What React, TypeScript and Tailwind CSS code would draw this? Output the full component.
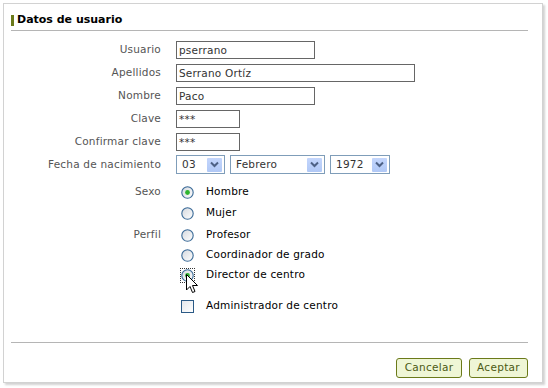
import React from 'react'

const font = { fontFamily: '"DejaVu Sans", Verdana, sans-serif' }

function Radio({ checked }: { checked?: boolean }) {
  return (
    <svg width="13" height="13" viewBox="0 0 13 13">
      <defs>
        <linearGradient id="rg" x1="0" y1="0" x2="1" y2="1">
          <stop offset="0" stopColor="#d4d8de" />
          <stop offset="1" stopColor="#ffffff" />
        </linearGradient>
      </defs>
      <circle cx="6.5" cy="6.5" r="5.7" fill="url(#rg)" stroke="#3a6a97" strokeWidth="1.1" />
      {checked && <circle cx="6.5" cy="6.5" r="2.4" fill="#2fb52f" />}
    </svg>
  )
}

function Select({ value, width }: { value: string; width: string }) {
  return (
    <div className={`${width} flex h-[19px] items-center justify-between border border-[#7f9db9] bg-white pl-[5px] pr-[2px] text-[10.5px] tracking-[0.2px] text-[#333]`}>
      <span>{value}</span>
      <span className="flex h-[14px] w-[15px] items-center justify-center rounded-[1px] bg-gradient-to-b from-[#c4d6fc] to-[#b0c8f6]">
        <svg width="9" height="7" viewBox="0 0 9 7">
          <path d="M1 1.5 L4.5 5 L8 1.5" fill="none" stroke="#4d6185" strokeWidth="2" />
        </svg>
      </span>
    </div>
  )
}

function Row({ label, children, className = 'h-[23px]' }: { label?: string; children: React.ReactNode; className?: string }) {
  return (
    <div className={`flex items-center ${className}`}>
      <div className="w-[150px] text-right text-[10.5px] tracking-[0.2px] text-[#555]">{label}</div>
      <div className="ml-[15px] flex items-center">{children}</div>
    </div>
  )
}

function Option({ label, checked }: { label: string; checked?: boolean }) {
  return (
    <div className="ml-[5px] flex items-center gap-[12px] text-[10.5px] tracking-[0.2px] text-black">
      <Radio checked={checked} />
      <span>{label}</span>
    </div>
  )
}

export default function App() {
  const inputCls = 'h-[18px] border border-[#666] bg-white pl-[2px] text-[10.5px] tracking-[0.2px] leading-[16px] text-[#333]'
  return (
    <div className="h-[388px] w-[548px] bg-white pl-[3px] pt-[3px]" style={font}>
      <div className="relative flex h-[380px] w-[540px] flex-col border border-[#d2d2d2] bg-white pl-[7px] pr-[14px] shadow-[2px_2px_2px_rgba(0,0,0,0.18)]">
        <div className="flex h-[26px] items-center pt-[6px]">
          <span className="h-[11px] w-[3px] bg-[#6b7a1a]" />
          <span className="ml-[3px] text-[11px] font-bold text-black">Datos de usuario</span>
        </div>
        <div className="h-px bg-[#b5b5b5]" />

        <div className="mt-[7px] flex flex-col">
          <Row label="Usuario">
            <div className={`${inputCls} w-[139px]`}>pserrano</div>
          </Row>
          <Row label="Apellidos">
            <div className={`${inputCls} w-[239px]`}>Serrano Ortíz</div>
          </Row>
          <Row label="Nombre">
            <div className={`${inputCls} w-[139px]`}>Paco</div>
          </Row>
          <Row label="Clave">
            <div className={`${inputCls} w-[64px]`}>***</div>
          </Row>
          <Row label="Confirmar clave">
            <div className={`${inputCls} w-[64px]`}>***</div>
          </Row>
          <Row label="Fecha de nacimiento">
            <div className="flex gap-[5px]">
              <Select value="03" width="w-[49px]" />
              <Select value="Febrero" width="w-[95px]" />
              <Select value="1972" width="w-[60px]" />
            </div>
          </Row>

          <Row label="Sexo" className="mt-[6px] h-[20px]">
            <Option label="Hombre" checked />
          </Row>
          <Row className="mt-[1px] h-[20px]">
            <Option label="Mujer" />
          </Row>
          <Row label="Perfil" className="mt-[2px] h-[20px]">
            <Option label="Profesor" />
          </Row>
          <Row className="h-[20px]">
            <Option label="Coordinador de grado" />
          </Row>
          <Row className="h-[20px]">
            <div className="ml-[5px] flex items-center gap-[12px] text-[10.5px] tracking-[0.2px] text-black">
              <span className="relative flex">
                <Radio checked />
                <span className="absolute -left-[1px] -top-[1px] h-[15px] w-[15px] border border-dotted border-[#333]" />
                <svg className="absolute left-[5px] top-[5px]" width="13" height="21" viewBox="0 0 13 21">
                  <path d="M0.5 0.5 L0.5 16 L4 12.5 L6.5 18.5 L9 17.5 L6.5 11.5 L11.5 11.5 Z" fill="#fff" stroke="#000" strokeWidth="1" />
                </svg>
              </span>
              <span>Director de centro</span>
            </div>
          </Row>
          <Row className="mt-[11px] h-[20px]">
            <div className="ml-[5px] flex items-center gap-[12px] text-[10.5px] tracking-[0.2px] text-black">
              <span className="h-[13px] w-[13px] border border-[#2b5a86] bg-gradient-to-br from-[#e4e7ec] to-white" />
              <span>Administrador de centro</span>
            </div>
          </Row>
        </div>

        <div className="mt-auto h-px bg-[#b5b5b5]" />
        <div className="flex h-[39px] items-start justify-end gap-[7px] pt-[15px]">
          <button className="h-[20px] w-[66px] rounded-[3px] border border-[#6b7a1a] bg-[#eff6d6] text-[10.5px] tracking-[0.3px] text-[#4c5a14]">Cancelar</button>
          <button className="h-[20px] w-[59px] rounded-[3px] border border-[#6b7a1a] bg-[#eff6d6] text-[10.5px] tracking-[0.3px] text-[#4c5a14]">Aceptar</button>
        </div>
      </div>
    </div>
  )
}
